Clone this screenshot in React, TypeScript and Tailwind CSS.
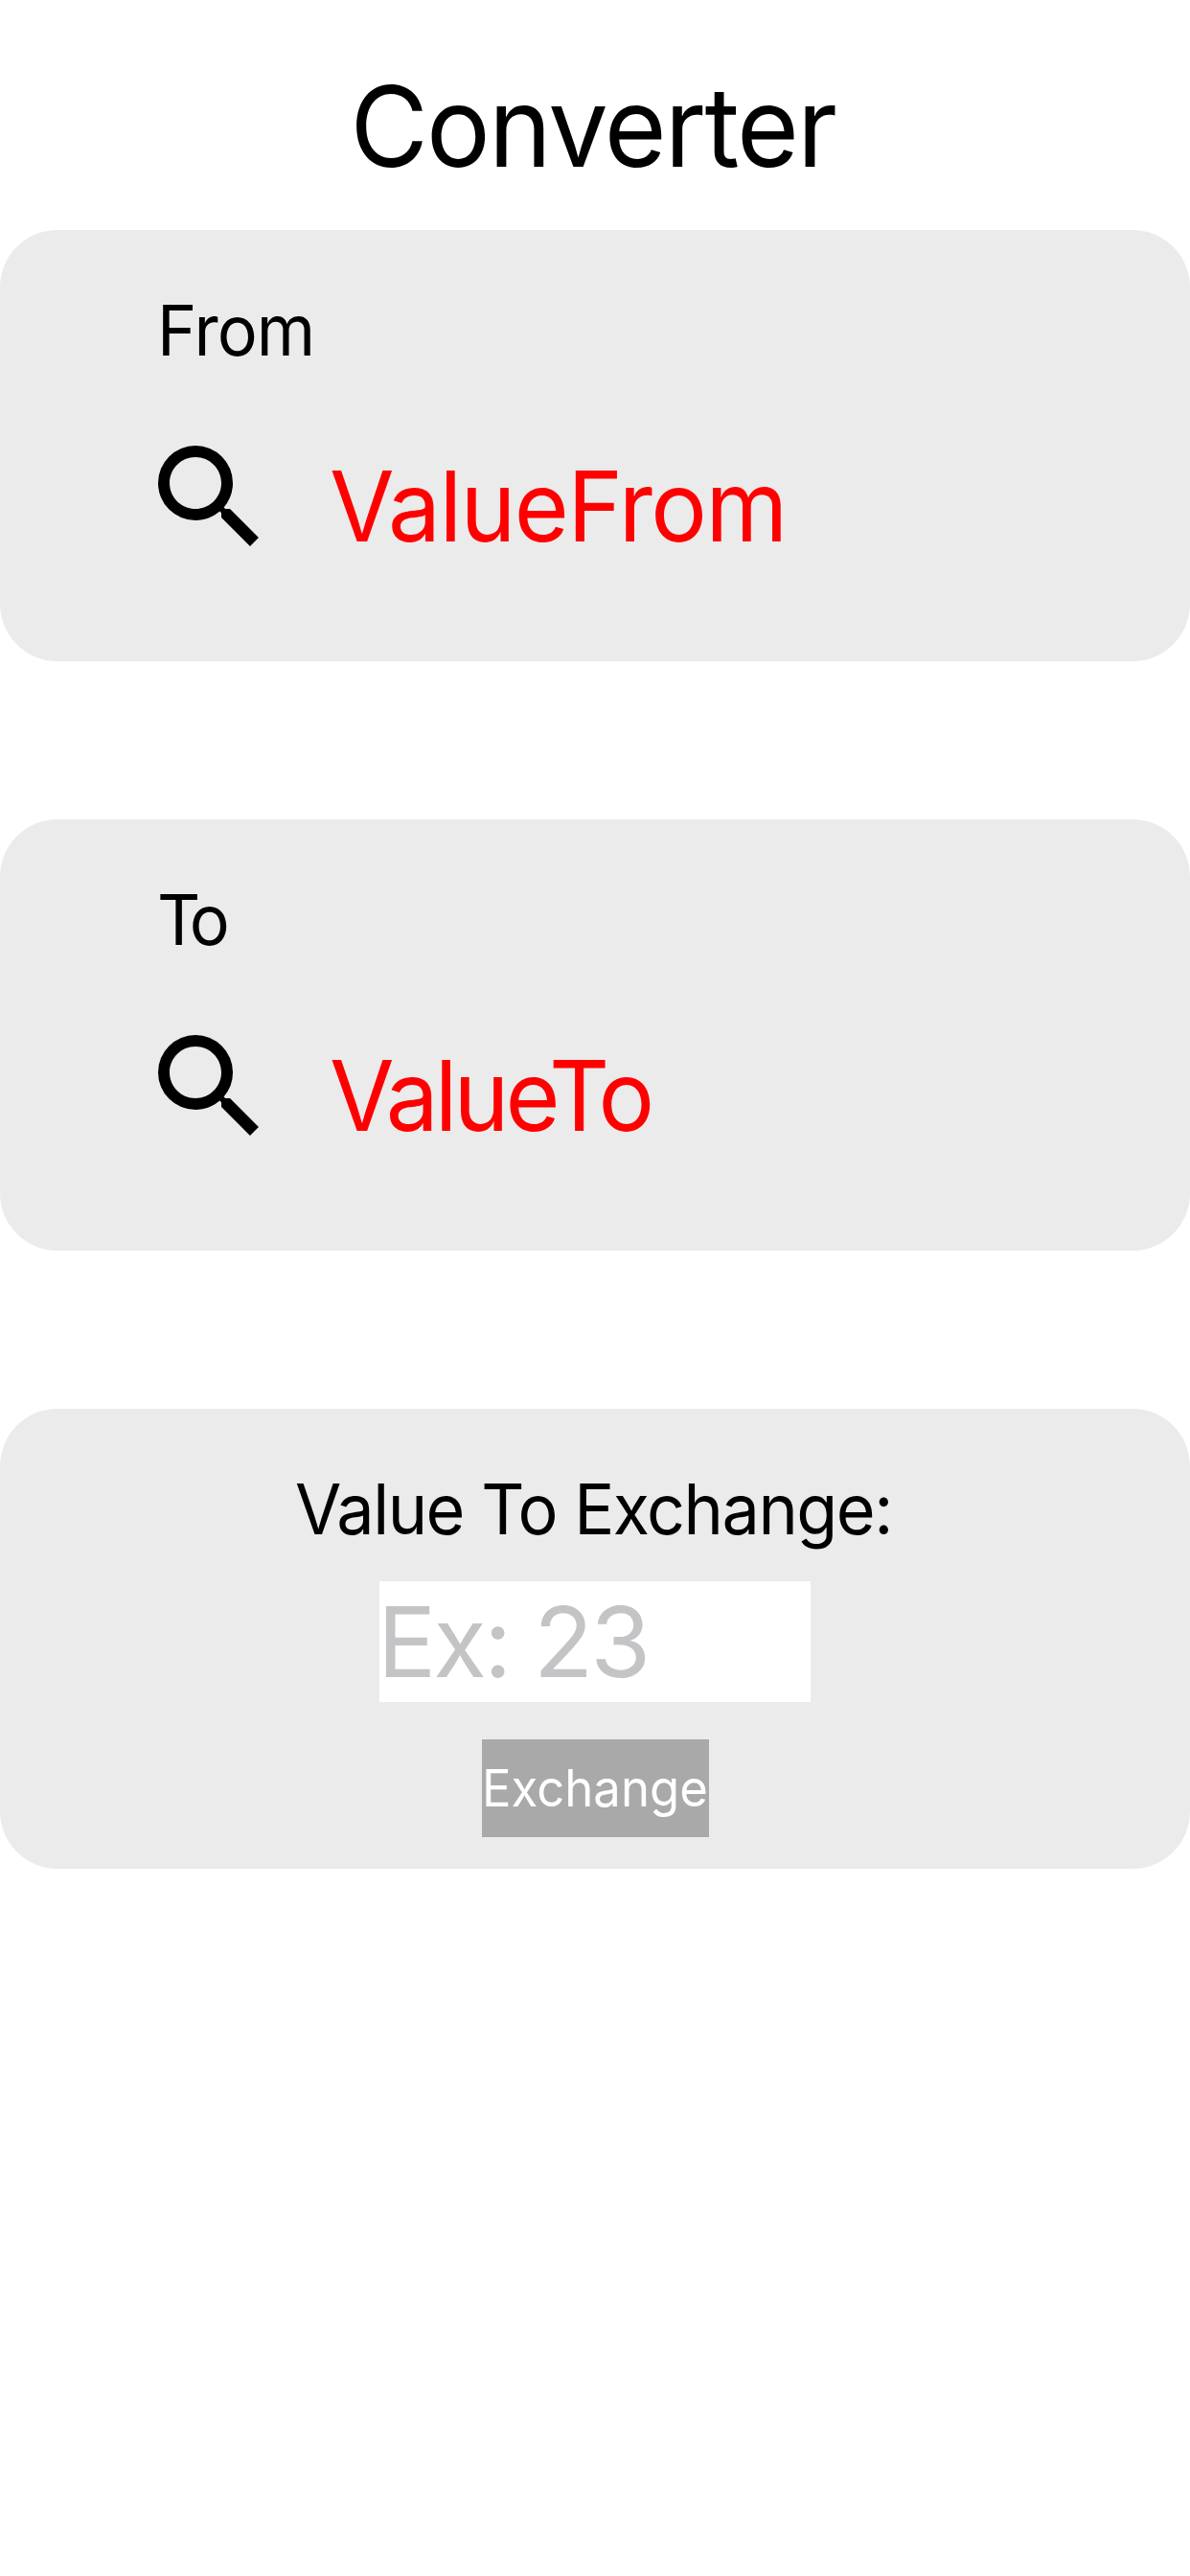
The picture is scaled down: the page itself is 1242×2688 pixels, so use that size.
import { MdSearch } from 'react-icons/md';

type CurrencyCardProps = {
  label: string;
  labelClass: string;
  value: string;
  valueClass: string;
};

function CurrencyCard({ label, labelClass, value, valueClass }: CurrencyCardProps) {
  return (
    <section className="h-[450px] w-full rounded-[60px] bg-[#ebebeb] pt-[60px]">
      <h2 className={`ml-[164px] w-max origin-left scale-x-96 text-[73px] leading-[90px] text-black ${labelClass}`}>
        {label}
      </h2>
      <div className="mt-[57px] ml-[147px] flex items-start gap-[53px]">
        <button type="button" aria-label={`Search ${label}`}>
          <MdSearch className="block size-36 text-black" />
        </button>
        <span className={`mt-[19px] origin-left scale-x-96 text-[102px] leading-[124px] text-[#ff0000] ${valueClass}`}>
          {value}
        </span>
      </div>
    </section>
  );
}

export default function App() {
  return (
    <main className="min-h-[2688px] w-full bg-white pt-[60px] font-[Inter,sans-serif]">
      <div className="mb-9 flex justify-center pr-[5px]">
        <h1 className="scale-x-96 text-[116px] leading-[144px] tracking-[-1.97px] text-black">Converter</h1>
      </div>
      <div className="flex flex-col gap-[165px]">
        <CurrencyCard
          label="From"
          labelClass="tracking-[-0.95px]"
          value="ValueFrom"
          valueClass="tracking-[-1.65px]"
        />
        <CurrencyCard
          label="To"
          labelClass="tracking-[-6.3px]"
          value="ValueTo"
          valueClass="tracking-[-4.1px]"
        />
        <section className="flex h-[480px] w-full flex-col items-center rounded-[60px] bg-[#ebebeb] pt-[60px]">
          <div className="pr-[3px]">
            <label
              htmlFor="amount"
              className="block scale-x-96 text-[73px] leading-[90px] tracking-[-1.55px] text-black"
            >
              Value To Exchange:
            </label>
          </div>
          <input
            id="amount"
            placeholder="Ex: 23"
            className="mt-[30px] h-[126px] w-[450px] bg-white p-0 indent-[-2px] text-[102px] leading-[126px] tracking-[-3px] text-black outline-none placeholder:text-[#c4c4c6]"
          />
          <button
            type="button"
            className="mt-[39px] h-[102px] w-[237px] bg-[#a9a9a9] text-left text-[53px] leading-[102px] whitespace-nowrap text-white"
          >
            <span className="block w-max origin-left scale-x-96">Exchange</span>
          </button>
        </section>
      </div>
    </main>
  );
}
